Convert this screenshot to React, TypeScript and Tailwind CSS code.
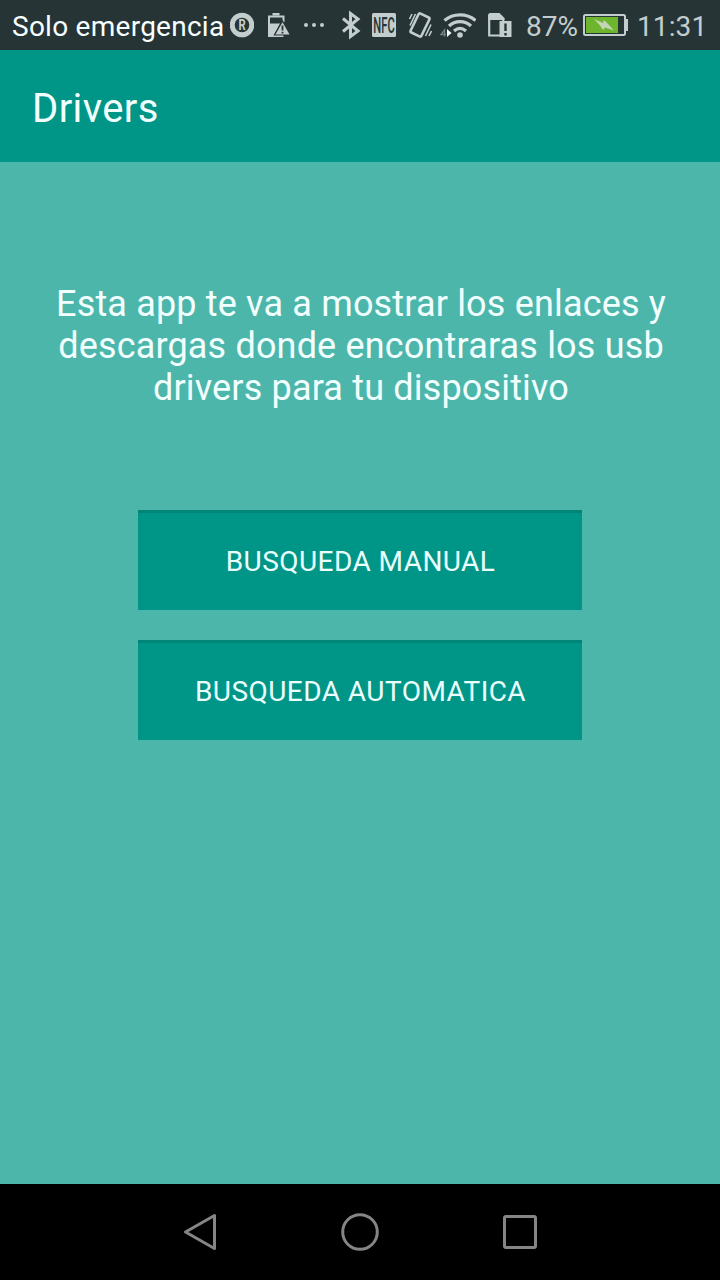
import React from 'react'

function StatusBar() {
  return (
    <div className="flex h-[50px] items-center bg-[#263436] pl-3 text-[28px] text-[#c3cdcd]">
      <span className="w-[218px] whitespace-nowrap pt-1 tracking-[0.26px] text-[#f7ffff]">Solo emergencia</span>

      {/* roaming */}
      <svg className="h-[50px] w-6 shrink-0" viewBox="230 0 24 50">
        <circle cx="242" cy="25" r="9.800" fill="none" stroke="#c3cdcd" strokeWidth="5" />
        <text transform="translate(242.2 30) scale(0.8 1)" textAnchor="middle" fontSize="14" fontWeight="700" fill="#c3cdcd">R</text>
      </svg>

      {/* battery warning */}
      <svg className="ml-[13px] h-[50px] w-6 shrink-0" viewBox="267 0 24 50">
        <path d="M272.500 13h7v2.500h-7z" fill="#c3cdcd" />
        <path d="M269 24v-7.500h14.500V22" fill="none" stroke="#c3cdcd" strokeWidth="2" />
        <path d="M268 23.500h12l-7 13.500h-5z" fill="#c3cdcd" />
        <path d="M270 35h13.500v2h-13.500z" fill="#c3cdcd" />
        <path d="M282.500 21L290.500 35H274.500z" fill="#c3cdcd" stroke="#263436" strokeWidth="1.200" />
        <path d="M282.500 25.500v5M282.500 31.800v1.700" stroke="#263436" strokeWidth="1.800" />
      </svg>

      <svg className="ml-[13px] h-[50px] w-5 shrink-0" viewBox="304 0 20 50" fill="#c3cdcd">
        <circle cx="306" cy="25" r="2" />
        <circle cx="314" cy="25" r="2" />
        <circle cx="322" cy="25" r="2" />
      </svg>

      {/* bluetooth */}
      <svg className="ml-[17px] h-[50px] w-5 shrink-0" viewBox="341 0 20 50">
        <path d="M343 18.500l15 12.500-7.500 5.500v-23l7.500 5.500L343 31.500" fill="none" stroke="#c3cdcd" strokeWidth="3" />
      </svg>

      {/* nfc */}
      <svg className="ml-[11px] h-[50px] w-6 shrink-0" viewBox="372 0 24 50">
        <rect x="372" y="13" width="24" height="24" rx="1.500" fill="#c3cdcd" />
        <text transform="translate(384 32.500) scale(0.52 1)" textAnchor="middle" fontSize="21.500" fontWeight="500" fill="#263436">NFC</text>
      </svg>

      {/* vibrate */}
      <svg className="ml-3 h-[50px] w-6 shrink-0" viewBox="408 0 24 50" fill="none" stroke="#c3cdcd">
        <rect x="414" y="14.500" width="12" height="21" rx="1.500" strokeWidth="2.600" transform="rotate(26 420 25)" />
        <path d="M409.500 19l2.500-5M410 25.500l5.500-11.500M425.500 36l5.500-11.500M429 36l2.500-5" strokeWidth="1.600" />
      </svg>

      {/* wifi */}
      <svg className="ml-2 h-[50px] w-9 shrink-0" viewBox="440 0 36 50" fill="none" stroke="#c3cdcd">
        <path d="M444.500 20.500c8.500-7.500 22.500-7.500 31 0M449 26c6-5.700 16-5.700 22 0M454 31c4-3.500 8-3.500 12 0" strokeWidth="3.200" />
        <circle cx="460" cy="35" r="2.800" fill="#c3cdcd" stroke="none" />
        <path d="M447 29l4.500 4-4.500 4z" fill="#f7ffff" stroke="none" />
        <path d="M444.500 36.500V30l-3.500 4.500h5" stroke="#758080" strokeWidth="1.400" />
      </svg>

      {/* sim alert */}
      <svg className="ml-3 h-[50px] w-6 shrink-0" viewBox="488 0 24 50">
        <path d="M489.200 19h14v16.500h-14z" fill="none" stroke="#c3cdcd" strokeWidth="2.200" />
        <path d="M488 20v-5.500l1.500-1.500h10l5 5v2z" fill="#c3cdcd" />
        <path d="M499.500 21h12v16h-12z" fill="#c3cdcd" />
        <path d="M505.500 23.500v7.500M505.500 33v2.500" stroke="#263436" strokeWidth="2.400" />
      </svg>

      <span className="ml-3.5 w-[57px] whitespace-nowrap pt-1">87%</span>

      {/* charging */}
      <svg className="h-[50px] w-[45px] shrink-0" viewBox="583 0 45 50">
        <rect x="584" y="15" width="41" height="20" rx="1.500" fill="none" stroke="#c3cdcd" strokeWidth="2" />
        <path d="M625 19h3v12h-3z" fill="#c3cdcd" />
        <path d="M586 17h32v16h-32z" fill="#6db52d" />
        <path d="M594 19l9 4 1-3 4 4 6 6.500-9-3-2 2.500-3-4.500z" fill="#c3d5b5" />
      </svg>

      <span className="ml-[9px] whitespace-nowrap pt-1 tracking-[0.1px]">11:31</span>
    </div>
  )
}

function NavBar() {
  return (
    <div className="flex h-24 items-center justify-center gap-[120px] bg-black">
      <svg className="size-10" viewBox="180 1212 40 40" fill="none" stroke="#858585" strokeWidth="3" strokeLinejoin="round">
        <path d="M185.500 1232L214.500 1215.500V1248.500z" />
      </svg>
      <svg className="size-10" viewBox="340 1212 40 40" fill="none" stroke="#858585" strokeWidth="3">
        <circle cx="360" cy="1232" r="17.300" />
      </svg>
      <svg className="size-10" viewBox="500 1212 40 40" fill="none" stroke="#858585" strokeWidth="3">
        <rect x="504.500" y="1216.500" width="31" height="31" rx="1.500" />
      </svg>
    </div>
  )
}

function App() {
  const buttons = ['BUSQUEDA MANUAL', 'BUSQUEDA AUTOMATICA']

  return (
    <div className="flex h-[1280px] w-[720px] flex-col overflow-hidden bg-[#4db6ab] font-[Roboto,sans-serif] text-[#f2ffff]">
      <StatusBar />
      <header className="flex h-28 items-center bg-[#009687] pl-8 pt-1.5">
        <h1 className="text-[40px] leading-[48px] tracking-[0.4px]">Drivers</h1>
      </header>

      <main className="flex flex-1 flex-col items-center pt-[121px]">
        <p className="pl-0.5 text-center text-[36px] leading-[42px] tracking-[0.17px]">
          Esta app te va a mostrar los enlaces y<br />
          descargas donde encontraras los usb<br />
          drivers para tu dispositivo
        </p>
        <div className="mt-[101px] flex flex-col gap-[30px]">
          {buttons.map((label) => (
            <button key={label} className="h-[100px] w-[444px] border-t-[3px] border-[#008577] bg-[#009687] pl-px text-[28px] tracking-[0.45px] text-[#ebffff]">
              {label}
            </button>
          ))}
        </div>
      </main>
      <NavBar />
    </div>
  )
}

export default App
